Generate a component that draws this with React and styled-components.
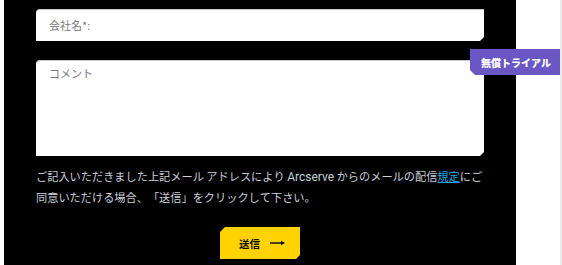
import React from 'react';
import styled, { createGlobalStyle } from 'styled-components';

const Global = createGlobalStyle`
  html, body {
    margin: 0;
    padding: 0;
    background: #fff;
    overflow: hidden;
  }
  body {
    font-family: "Noto Sans CJK JP", "Noto Sans", sans-serif;
  }
`;

const Page = styled.div`
  position: relative;
  display: flex;
  width: 562px;
  height: 265px;
`;

const Panel = styled.form`
  margin-left: 4px;
  width: 448px;
  height: 265px;
  padding: 9px 32px 0;
  background: #000;
  display: flex;
  flex-direction: column;
`;

const Field = styled.div`
  box-sizing: border-box;
  width: 448px;
  height: ${p => p.$h}px;
  margin-bottom: ${p => p.$mb || 0}px;
  background: #fff;
  border-top: 1px solid #c9c9c9;
  border-top-left-radius: 4px;
  clip-path: polygon(0 0, 100% 0, 100% calc(100% - 4px), calc(100% - 4px) 100%, 0 100%);
  padding: ${p => p.$pt}px 13px 0;
  font-size: 11px;
  color: #7a7a7a;
  line-height: 14px;
`;

const Note = styled.p`
  margin: 10px 0 0;
  font-size: 11.2px;
  line-height: 20px;
  color: #c9cfd9;
  white-space: nowrap;
  font-kerning: none;
  text-spacing-trim: space-all;
`;

const Latin = styled.span`
  font-family: Roboto, "Liberation Sans", sans-serif;
  font-size: 12px;
`;

const Link = styled.a`
  color: #22a7e6;
  text-decoration: underline;
`;

const Submit = styled.button`
  align-self: center;
  margin-top: 20px;
  width: 80px;
  height: 32px;
  border: 0;
  background: #ffd200;
  color: #111;
  font-family: "Noto Sans CJK JP", sans-serif;
  font-weight: 700;
  font-size: 10.5px;
  display: flex;
  align-items: center;
  justify-content: center;
  gap: 10px;
  padding: 0 0 0 4px;
  clip-path: polygon(5px 0, 100% 0, 100% calc(100% - 4px), calc(100% - 4px) 100%, 0 100%, 0 5px);
`;

const Arrow = styled.svg`
  width: 15px;
  height: 6px;
`;

const Side = styled.div`
  flex: 1;
  display: flex;
  justify-content: flex-end;
`;

const Scroll = styled.div`
  width: 2px;
  height: 100%;
  background: #ececec;
`;

const Badge = styled.div`
  position: absolute;
  left: 470px;
  top: 49px;
  width: 90px;
  height: 26px;
  background: #6a57c4;
  color: #fff;
  font-weight: 900;
  font-size: 10px;
  display: flex;
  align-items: center;
  justify-content: center;
  padding-left: 2px;
  box-sizing: border-box;
  clip-path: polygon(0 0, 100% 0, 100% 100%, 5px 100%, 0 calc(100% - 5px));
`;

export default function App() {
  return (
    <Page>
      <Global />
      <Panel onSubmit={e => e.preventDefault()}>
        <Field $h={32} $pt={8} $mb={19}>会社名*:</Field>
        <Field $h={96} $pt={5}>コメント</Field>
        <Note>
          ご記入いただきました上記メール アドレスにより <Latin>Arcserve</Latin> からのメールの配信<Link>規定</Link>にご
          <br />
          同意いただける場合、「送信」をクリックして下さい。
        </Note>
        <Submit type="submit">
          送信
          <Arrow viewBox="0 0 15 6">
            <path d="M0 3h12" stroke="#111" strokeWidth="1.3" />
            <path d="M11 0.8L15 3L11 5.2Z" fill="#111" />
          </Arrow>
        </Submit>
      </Panel>
      <Side>
        <Scroll />
      </Side>
      <Badge>無償トライアル</Badge>
    </Page>
  );
}
